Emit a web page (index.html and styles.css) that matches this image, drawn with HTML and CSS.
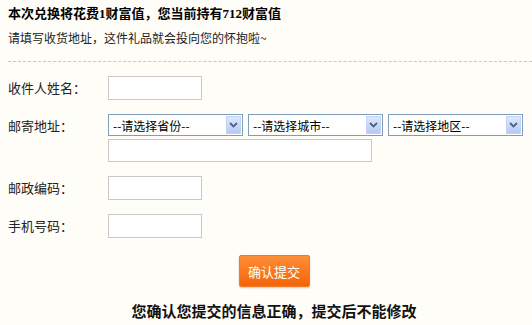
FILE: index.html
```html
<!DOCTYPE html>
<html lang="zh-CN">
<head>
    <meta charset="UTF-8">
    <meta name="viewport" content="width=device-width, initial-scale=1.0">
    <title>兑换礼品</title>
    <link rel="stylesheet" href="styles.css">
</head>
<body>
    <div class="intro">
        <h1 class="intro-title">本次兑换将花费1财富值，您当前持有712财富值</h1>
        <p class="intro-tip">请填写收货地址，这件礼品就会投向您的怀抱啦~</p>
    </div>
    <form class="address-form">
        <div class="row">
            <label class="label" for="receiver">收件人姓名：</label>
            <input type="text" id="receiver" class="text-input short">
        </div>
        <div class="row row-address">
            <label class="label" for="province">邮寄地址：</label>
            <div class="address-fields">
                <div class="selects">
                    <span class="select-wrap">
                        <select id="province" class="region">
                            <option>--请选择省份--</option>
                        </select>
                        <span class="select-arrow"><svg width="9" height="6" viewBox="0 0 9 6"><path d="M1 1l3.5 3.5L8 1" fill="none" stroke="#4d6185" stroke-width="1.8"/></svg></span>
                    </span>
                    <span class="select-wrap">
                        <select class="region">
                            <option>--请选择城市--</option>
                        </select>
                        <span class="select-arrow"><svg width="9" height="6" viewBox="0 0 9 6"><path d="M1 1l3.5 3.5L8 1" fill="none" stroke="#4d6185" stroke-width="1.8"/></svg></span>
                    </span>
                    <span class="select-wrap">
                        <select class="region">
                            <option>--请选择地区--</option>
                        </select>
                        <span class="select-arrow"><svg width="9" height="6" viewBox="0 0 9 6"><path d="M1 1l3.5 3.5L8 1" fill="none" stroke="#4d6185" stroke-width="1.8"/></svg></span>
                    </span>
                </div>
                <input type="text" class="text-input long">
            </div>
        </div>
        <div class="row">
            <label class="label" for="zipcode">邮政编码：</label>
            <input type="text" id="zipcode" class="text-input short">
        </div>
        <div class="row">
            <label class="label" for="mobile">手机号码：</label>
            <input type="text" id="mobile" class="text-input short">
        </div>
        <div class="actions">
            <button type="button" class="btn-submit">确认提交</button>
            <p class="notice">您确认您提交的信息正确，提交后不能修改</p>
        </div>
    </form>
</body>
</html>
```

FILE: styles.css
```css
* {
    box-sizing: border-box;
}
body {
    margin: 0;
    padding: 5px 0 0 8px;
    background-color: #fffdf7;
    font-family: "Noto Sans CJK SC", sans-serif;
    font-size: 12px;
    color: #222;
}
.intro {
    border-bottom: 1px dashed #c8c8c8;
    padding-bottom: 14px;
}
.intro-title {
    margin: 0;
    font-family: "Liberation Serif", "Noto Sans CJK SC", serif;
    font-size: 13px;
    font-weight: bold;
    line-height: 18px;
    color: #000;
}
.intro-tip {
    margin: 6px 0 0;
    font-size: 12px;
    line-height: 18px;
}
.address-form {
    padding-top: 14px;
}
.row {
    display: flex;
    align-items: flex-start;
    margin-bottom: 14px;
}
.label {
    width: 100px;
    font-size: 13px;
    line-height: 24px;
    color: #222;
}
.row-address .label {
    line-height: 23px;
}
.text-input {
    height: 24px;
    border: 1px solid #c8c8c8;
    background: #fff;
    padding: 0 4px;
    font-family: inherit;
    font-size: 12px;
}
.short {
    width: 94px;
}
.long {
    width: 264px;
    height: 23px;
    margin-top: 3px;
}
.address-fields {
    display: flex;
    flex-direction: column;
}
.selects {
    display: flex;
    gap: 5px;
}
.select-wrap {
    position: relative;
    display: inline-block;
}
.region {
    width: 135px;
    height: 22px;
    border: 1px solid #7f9db9;
    background: #fff;
    padding: 0 20px 0 4px;
    font-family: inherit;
    font-size: 12px;
    color: #000;
    appearance: none;
    -webkit-appearance: none;
    border-radius: 0;
}
.select-arrow {
    position: absolute;
    top: 2px;
    right: 2px;
    width: 15px;
    height: 18px;
    display: flex;
    align-items: center;
    justify-content: center;
    background: linear-gradient(#dfe8fc, #b7caf3);
    border: 1px solid #c3d3f5;
    pointer-events: none;
}
.actions {
    padding-left: 8px;
    display: flex;
    flex-direction: column;
    align-items: center;
    padding-top: 3px;
}
.btn-submit {
    width: 71px;
    height: 32px;
    border: 1px solid #ee7a2a;
    border-radius: 2px;
    background: linear-gradient(#ff8e38, #f46408);
    box-shadow: 0 1px 2px rgba(0, 0, 0, 0.2);
    color: #fff;
    font-family: inherit;
    font-size: 13px;
    cursor: pointer;
}
.notice {
    margin: 14px 0 0;
    font-size: 15px;
    font-weight: bold;
    line-height: 20px;
    color: #111;
}
```
